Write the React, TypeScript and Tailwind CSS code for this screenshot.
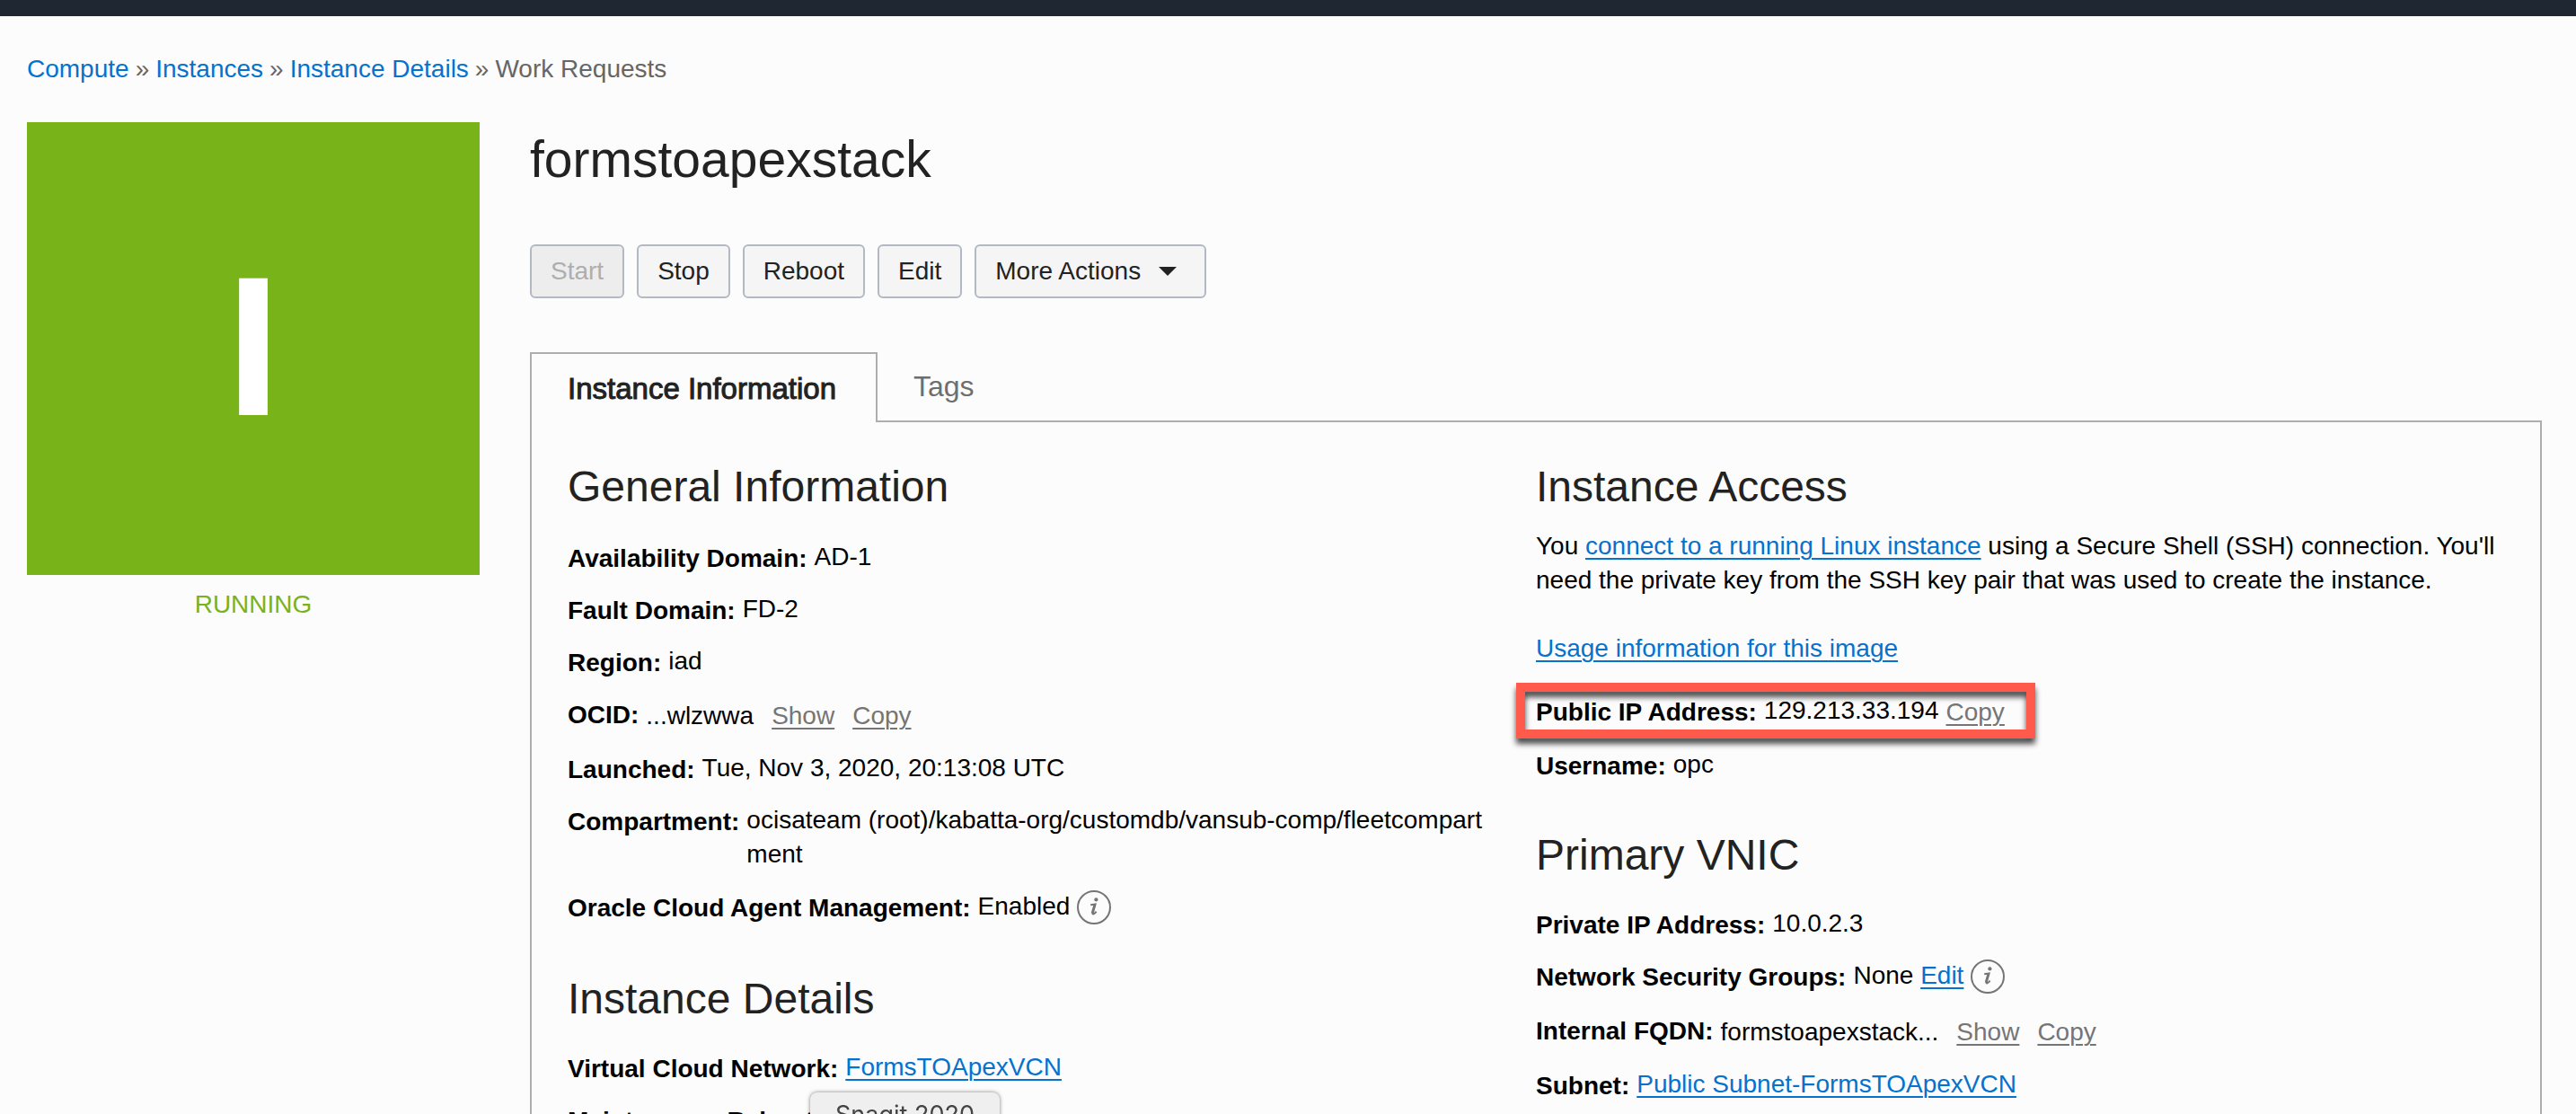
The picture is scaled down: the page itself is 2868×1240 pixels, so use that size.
import type { ReactNode } from "react";

function TextLink({ children }: { children: ReactNode }) {
  return (
    <a href="#" className="text-[#0572ce] underline underline-offset-4 decoration-2">
      {children}
    </a>
  );
}

function MutedLink({ children }: { children: ReactNode }) {
  return (
    <a href="#" className="text-[#757575] underline underline-offset-4 decoration-2">
      {children}
    </a>
  );
}

function InfoIcon({ label }: { label: string }) {
  return (
    <button type="button" aria-label={label} className="ml-2 h-10 shrink-0 text-[#757575]">
      <svg viewBox="0 0 38 38" className="size-[38px]" fill="none">
        <circle cx="19" cy="19" r="18" stroke="currentColor" strokeWidth="2" />
        <circle cx="21.4" cy="10.4" r="2.1" fill="currentColor" />
        <path
          d="M15.2 16.2 L20.6 15.4 L17.6 25.4 C17.2 27.2 19 26.8 21.6 23.6"
          stroke="currentColor"
          strokeWidth="2"
        />
        <path d="M19.9 15.6 L17 25.6" stroke="currentColor" strokeWidth="2.6" />
      </svg>
    </button>
  );
}

function Row({ label, children }: { label: string; children: ReactNode }) {
  return (
    <div className="mb-5 flex items-start">
      <dt className="-mb-0.5 shrink-0 pr-2 pt-0.5 font-bold">{label}:</dt>
      <dd className="flex min-w-0">{children}</dd>
    </div>
  );
}

function Heading({ children }: { children: ReactNode }) {
  return <h2 className="text-[48px] leading-[58px] text-[#222]">{children}</h2>;
}

const buttonStyle =
  "h-[60px] rounded-md border-2 border-[#b3b9c3] bg-[#f5f5f5] px-[21px] text-[28px] leading-none text-[#222] disabled:bg-[#ededed] disabled:text-[#aeaeae]";

export default function App() {
  return (
    <div className="h-screen overflow-hidden bg-[#fcfcfc] font-['Liberation_Sans',Arial,sans-serif] text-[28px] leading-[38px] text-black">
      <header className="h-[18px] bg-[#1f2733]" />
      <nav aria-label="Breadcrumb" className="flex gap-[7px] px-[30px] pt-10 text-[#666]">
        <a href="#" className="text-[#0572ce]">Compute</a>
        <span>»</span>
        <a href="#" className="text-[#0572ce]">Instances</a>
        <span>»</span>
        <a href="#" className="text-[#0572ce]">Instance Details</a>
        <span>»</span>
        <span>Work Requests</span>
      </nav>

      <div className="flex gap-14 pl-[30px] pr-[38px] pt-10">
        <aside className="w-[504px] shrink-0 text-center">
          <div className="flex h-[504px] items-center justify-center bg-[#78b31a] pb-1 text-[220px] font-bold leading-none text-white">
            I
          </div>
          <p className="mt-3.5 text-[#78b31a]">RUNNING</p>
        </aside>

        <main className="min-w-0 flex-1">
          <h1 className="mt-2 text-[57px] leading-[66px] text-[#222]">formstoapexstack</h1>

          <div className="mt-[62px] flex gap-3.5">
            <button type="button" disabled className={buttonStyle}>Start</button>
            <button type="button" className={buttonStyle}>Stop</button>
            <button type="button" className={buttonStyle}>Reboot</button>
            <button type="button" className={buttonStyle}>Edit</button>
            <button type="button" className={`${buttonStyle} flex items-center`}>
              More Actions
              <svg viewBox="0 0 20 10" className="ml-5 mr-2.5 h-2.5 w-5" fill="currentColor">
                <path d="M0 0H20L10 10Z" />
              </svg>
            </button>
          </div>

          <div role="tablist" className="mt-[60px] flex">
            <button
              type="button"
              role="tab"
              aria-selected="true"
              className="relative z-10 -mb-0.5 h-[78px] border-2 border-b-0 border-[#aeaeae] bg-[#fcfcfc] pl-10 pr-11 text-[33px] leading-none text-[#222] [-webkit-text-stroke:1px_#222]"
            >
              Instance Information
            </button>
            <button type="button" role="tab" aria-selected="false" className="px-10 text-[32px] leading-none text-[#6e6e6e]">
              Tags
            </button>
          </div>

          <div role="tabpanel" className="grid grid-cols-2 border-2 border-[#aeaeae] px-10 pt-[43px]">
            <section>
              <Heading>General Information</Heading>
              <dl className="mt-[30px]">
                <Row label="Availability Domain">AD-1</Row>
                <Row label="Fault Domain">FD-2</Row>
                <Row label="Region">iad</Row>
                <Row label="OCID">
                  <span className="flex gap-5 pt-[3px]">
                    ...wlzwwa <MutedLink>Show</MutedLink> <MutedLink>Copy</MutedLink>
                  </span>
                </Row>
                <Row label="Launched">Tue, Nov 3, 2020, 20:13:08 UTC</Row>
                <Row label="Compartment">
                  <span className="min-w-0 break-all pr-10">
                    ocisateam (root)/kabatta-org/customdb/vansub-comp/fleetcompartment
                  </span>
                </Row>
                <Row label="Oracle Cloud Agent Management">
                  Enabled <InfoIcon label="About agent management" />
                </Row>
              </dl>
              <div className="mt-[53px]">
                <Heading>Instance Details</Heading>
              </div>
              <dl className="mt-7">
                <Row label="Virtual Cloud Network">
                  <TextLink>FormsTOApexVCN</TextLink>
                </Row>
                <Row label="Maintenance Reboot">-</Row>
              </dl>
            </section>

            <section>
              <Heading>Instance Access</Heading>
              <p className="mt-[18px]">
                You <TextLink>connect to a running Linux instance</TextLink> using a Secure Shell (SSH) connection. You'll
                need the private key from the SSH key pair that was used to create the instance.
              </p>
              <p className="mb-[31px] mt-[38px]">
                <TextLink>Usage information for this image</TextLink>
              </p>
              <dl>
                <div className="relative w-fit">
                  <Row label="Public IP Address">
                    129.213.33.194
                    <span className="pl-2 pt-0.5">
                      <MutedLink>Copy</MutedLink>
                    </span>
                  </Row>
                  <div className="pointer-events-none absolute -left-[22px] -right-[34px] -top-3 h-[62px] border-10 border-[#ff5a4c] drop-shadow-[0_6px_3px_rgba(0,0,0,0.7)]" />
                </div>
                <Row label="Username">opc</Row>
              </dl>
              <div className="mt-[53px]">
                <Heading>Primary VNIC</Heading>
              </div>
              <dl className="mt-7">
                <Row label="Private IP Address">10.0.2.3</Row>
                <Row label="Network Security Groups">
                  None&nbsp;<TextLink>Edit</TextLink> <InfoIcon label="About network security groups" />
                </Row>
                <Row label="Internal FQDN">
                  <span className="flex gap-5 pt-[3px]">
                    formstoapexstack... <MutedLink>Show</MutedLink> <MutedLink>Copy</MutedLink>
                  </span>
                </Row>
                <Row label="Subnet">
                  <TextLink>Public Subnet-FormsTOApexVCN</TextLink>
                </Row>
              </dl>
            </section>
          </div>
        </main>
      </div>

      <div
        role="tooltip"
        className="fixed left-[902px] top-[1216px] z-20 rounded-t-lg bg-[#efefef] px-7 py-1.5 font-['Inter',sans-serif] text-[27px] text-[#444] shadow-[0_0_4px_rgba(0,0,0,0.5)]"
      >
        Snagit 2020
      </div>
    </div>
  );
}
